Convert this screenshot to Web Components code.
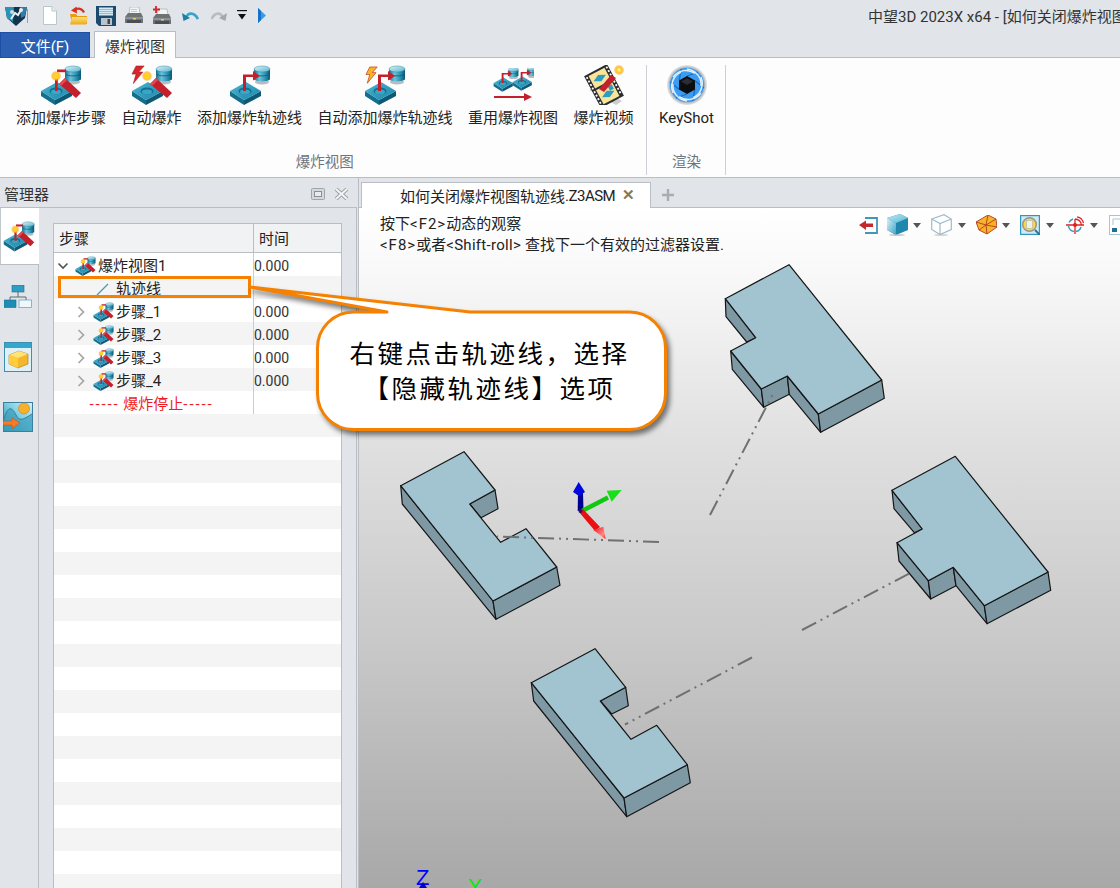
<!DOCTYPE html>
<html lang="zh">
<head>
<meta charset="utf-8">
<title>中望3D</title>
<style>
html,body{margin:0;padding:0;overflow:hidden;background:#e1e5e9}
body{font:15px Roboto,"Noto Sans CJK SC",sans-serif;color:#222}
</style>
</head>
<body>
<zw-app>
  <zw-titlebar title-text="中望3D 2023X x64 - [如何关闭爆炸视图"></zw-titlebar>
  <zw-menutabs></zw-menutabs>
  <zw-ribbon>
    <zw-ribbon-group label="爆炸视图" style="--gap:15.5px;--pl:16px;--pr:13.5px">
      <zw-ribbon-item icon="step" label="添加爆炸步骤"></zw-ribbon-item>
      <zw-ribbon-item icon="auto" label="自动爆炸"></zw-ribbon-item>
      <zw-ribbon-item icon="track" label="添加爆炸轨迹线"></zw-ribbon-item>
      <zw-ribbon-item icon="autotrack" label="自动添加爆炸轨迹线"></zw-ribbon-item>
      <zw-ribbon-item icon="reuse" label="重用爆炸视图"></zw-ribbon-item>
      <zw-ribbon-item icon="video" label="爆炸视频"></zw-ribbon-item>
    </zw-ribbon-group>
    <zw-ribbon-group label="渲染" style="--gap:0;--pl:12px;--pr:12px">
      <zw-ribbon-item icon="keyshot" label="KeyShot"></zw-ribbon-item>
    </zw-ribbon-group>
  </zw-ribbon>
  <zw-workspace>
    <zw-manager>
      <zw-tree>
        <zw-tree-row level="0" chevron="open" icon="step" label="爆炸视图1" time="0.000"></zw-tree-row>
        <zw-tree-row level="1" icon="line" label="轨迹线"></zw-tree-row>
        <zw-tree-row level="1" chevron="closed" icon="step" label="步骤_1" time="0.000"></zw-tree-row>
        <zw-tree-row level="1" chevron="closed" icon="step" label="步骤_2" time="0.000"></zw-tree-row>
        <zw-tree-row level="1" chevron="closed" icon="step" label="步骤_3" time="0.000"></zw-tree-row>
        <zw-tree-row level="1" chevron="closed" icon="step" label="步骤_4" time="0.000"></zw-tree-row>
        <zw-tree-row stop></zw-tree-row>
      </zw-tree>
    </zw-manager>
    <zw-viewport></zw-viewport>
  </zw-workspace>
  <zw-highlight></zw-highlight>
  <zw-callout>
    <span>右键点击轨迹线，选择</span>
    <span>【隐藏轨迹线】选项</span>
  </zw-callout>
</zw-app>

<script>
const DEFS = `<defs>
<linearGradient id="cyl" x1="0" x2="1" y1="0" y2="0"><stop offset="0" stop-color="#16708f"/><stop offset=".35" stop-color="#6cc3da"/><stop offset=".7" stop-color="#2b93b3"/><stop offset="1" stop-color="#0d5672"/></linearGradient>
<linearGradient id="cap" x1="0" x2="1" y1="0" y2="1"><stop offset="0" stop-color="#d8f0f6"/><stop offset="1" stop-color="#5eb4cd"/></linearGradient>
<radialGradient id="spark"><stop offset="0" stop-color="#fff6a8"/><stop offset=".55" stop-color="#ffc81e"/><stop offset="1" stop-color="#ff8a00" stop-opacity=".25"/></radialGradient>
<linearGradient id="plateTop" x1="0" x2="1" y1="0" y2="1"><stop offset="0" stop-color="#4cb4d2"/><stop offset="1" stop-color="#1c87aa"/></linearGradient>
<linearGradient id="folder" x1="0" x2="0" y1="0" y2="1"><stop offset="0" stop-color="#ffe07a"/><stop offset="1" stop-color="#f0a818"/></linearGradient>
<linearGradient id="boxTop" x1="0" x2="1" y1="0" y2="1"><stop offset="0" stop-color="#bfeaf5"/><stop offset="1" stop-color="#55b7d6"/></linearGradient>
<linearGradient id="boxFace" x1="0" x2="1" y1="0" y2="1"><stop offset="0" stop-color="#d9f2f8"/><stop offset="1" stop-color="#3fa3c7"/></linearGradient>
<linearGradient id="scene" x1="0" x2="1" y1="1" y2="0"><stop offset="0" stop-color="#1b7f9f"/><stop offset=".55" stop-color="#7fd0e4"/><stop offset="1" stop-color="#d5f1f7"/></linearGradient>
<radialGradient id="ks" cx=".5" cy=".5" r=".5"><stop offset=".82" stop-color="#8a97a3"/><stop offset=".92" stop-color="#c5ccd2"/><stop offset="1" stop-color="#e4e7ea"/></radialGradient>
</defs>`;
const plate = `<path d="M1 26V31L15 40V35Z" fill="#146f8e"/><path d="M15 35V40L32 31V26Z" fill="#0e5a76"/><path d="M1 26L17 17 32 26 15 35Z" fill="url(#plateTop)"/><ellipse cx="16" cy="26" rx="6.5" ry="3.6" fill="#146f8e"/><ellipse cx="16" cy="27" rx="5" ry="2.4" fill="#3aa5c6"/>`;
const db = (x=25,y=1,s=1)=>`<g transform="translate(${x} ${y}) scale(${s})"><ellipse cx="8" cy="16" rx="7" ry="2.5" fill="#9aa0a4" opacity=".7"/><path d="M0 3V13C0 16 16 16 16 13V3Z" fill="url(#cyl)"/><path d="M.5 8C2 10.5 14 10.5 15.5 8" fill="none" stroke="#0d5672" stroke-width=".8"/><ellipse cx="8" cy="3" rx="8" ry="3" fill="url(#cap)" stroke="#2b8cab" stroke-width=".5"/></g>`;
const bar = `<path d="M19 19L25 13 41 28 36 33Z" fill="#c3202c"/><path d="M19 19L25 13 27 15 21 21Z" fill="#e04a50"/>`;
const spark = `<circle cx="16" cy="11" r="5" fill="url(#spark)"/><path d="M16 6l.8 4 4-.8-3 1.800 3 1.800-4-.8-.8 4-.8-4-4 .8 3-1.800-3-1.800 4 .8z" fill="#ffd21e"/>`;
const wire = `<path d="M15 12V26h2.800V12z" fill="#c3202c"/><path d="M17 4.500h9V7.200h-9z" fill="#c3202c"/>`;
const bolt = `<path d="M9 0H3L0 6h3L1 13 8 4.500H5z" transform="translate(1 1) scale(1.350)" fill="#d8262c" stroke="#8e1a1a" stroke-width=".4"/>`;
const boltY = `<path d="M9 0H3L0 6h3L1 13 8 4.500H5z" transform="translate(2 2) scale(1.250)" fill="#f6b52a" stroke="#c0441c" stroke-width=".6"/>`;
const elbow = `<path d="M14 26V9.500H24V6L31 11 24 15.500V12H17V26Z" fill="#c3202c"/>`;
const svg = (w,h,b)=>`<svg xmlns="http://www.w3.org/2000/svg" viewBox="0 0 ${w} ${h}" width="100%" height="100%" style="display:block">${DEFS}${b}</svg>`;
const arr = `<path d="M1 4H9L5 9Z" fill="#555"/>`;
const ICONS = {
  step: svg(42,42,plate+db()+wire+bar+spark),
  auto: svg(42,42,plate+db()+bar+spark+bolt),
  track: svg(42,42,plate+db(25,1)+elbow),
  autotrack: svg(42,42,plate+db(25,1)+elbow+boltY),
  reuse: svg(42,36,`<g transform="translate(1 -1) scale(.62)">${plate}${db(25,1)}${elbow}</g><g transform="translate(20 -2) scale(.62)">${plate}${db(25,1)}${elbow}</g><path d="M2 28H32V25L40 29 32 33V30H2Z" fill="#c3202c"/>`),
  video: svg(40,40,`<path d="M5 25L32 40 38 36 12 21Z" fill="#c9ced2"/><g transform="rotate(-28 20 21)"><rect x="7" y="3" width="26" height="36" fill="#2a2c2e"/><rect x="11" y="5" width="18" height="14" fill="#f8e49a"/><rect x="11" y="21" width="18" height="16" fill="#f8e49a"/><g fill="#fff">${[5,9,13,17,21,25,29,33].map(y=>`<rect x="8" y="${y}" width="1.800" height="2"/><rect x="30.300" y="${y}" width="1.800" height="2"/>`).join('')}</g><path d="M13 12l7-3.500 7 3.500-7 3.500z" fill="#2f9dc0"/><path d="M13 30l7-3.500 7 3.500-7 3.500z" fill="#2f9dc0"/><rect x="23" y="23" width="4.500" height="5" fill="#2f9dc0"/></g><path d="M15 24L27 10 32 13 20 27Z" fill="#c3202c"/><circle cx="35" cy="5" r="5" fill="url(#spark)"/>`),
  keyshot: svg(40,40,`<circle cx="20" cy="20" r="20" fill="url(#ks)"/><circle cx="20" cy="20" r="17" fill="#3b9cf2"/><g stroke="#1a6fc4" stroke-width="1.300">${[0,60,120,180,240,300].map(a=>`<path d="M20 11L31 7" transform="rotate(${a} 20 20)"/>`).join('')}</g><g fill="none" stroke="#e4f0fa" stroke-width="1.500">${[0,60,120,180,240,300].map(a=>`<path d="M20 4C29 5 35 13 34 21" transform="rotate(${a} 20 20)"/>`).join('')}</g><path d="M20 11L28 15.500V24.500L20 29 12 24.500V15.500Z" fill="#0c0d10"/><path d="M20 13L26 16.500 20 20 14 16.500Z" fill="#2a2d33"/>`),
  logo: svg(22,20,`<path d="M0 1H22L20 12 11 20 2 12Z" fill="#11344e"/><path d="M0 1H9L8 16 2 12Z" fill="#2a93b8"/><path d="M15 1H22L20 10 16 12Z" fill="#2f7fa6"/><path d="M6 13L10 7 13 9 16 4" fill="none" stroke="#e8eef2" stroke-width="2"/><circle cx="16" cy="4" r="2" fill="#e8eef2"/><circle cx="7" cy="6" r="2" fill="#cfd9df"/>`),
  file: svg(14,19,`<path d="M.5 .5H9L13.500 5V18.500H.5Z" fill="#fff" stroke="#b9c6ce"/><path d="M9 .5V5H13.500" fill="#e8eef2" stroke="#b9c6ce"/>`),
  open: svg(19,19,`<path d="M1 8H7L8.500 10H18V18H3Z" fill="#e99c12"/><path d="M3 11H19L17 18.500H1Z" fill="url(#folder)"/><path d="M15 6.500C13 2 9 2 6 4" fill="none" stroke="#d9301e" stroke-width="2.200"/><path d="M7.500 .5L2 4.500 8 7.500Z" fill="#d9301e"/>`),
  save: svg(20,20,`<path d="M0 0H20V20H3L0 17Z" fill="#1c4a6c"/><rect x="3" y="1.500" width="14" height="8" fill="#d5e9f2"/><path d="M3 3.500H17M3 5.500H17M3 7.500H17" stroke="#7fb4cd" stroke-width=".8"/><rect x="5" y="12" width="11" height="7" fill="#b9c3c9"/><rect x="11.500" y="13" width="2.500" height="5" fill="#33495a"/>`),
  print: svg(18,18,`<path d="M5 0H14L15 7H4Z" fill="#f4f4f4" stroke="#9aa1a6" stroke-width=".6"/><path d="M6 2.500H12M6 4.500H12" stroke="#aab" stroke-width=".6"/><path d="M3 6H16L18 10V16H0V10Z" fill="#6d7277"/><path d="M0 10H18V12H0Z" fill="#8d9296"/><rect x="2" y="13" width="14" height="3" fill="#4b4f53"/><rect x="8" y="11" width="3" height="1.500" fill="#e8d43a"/>`),
  print2: svg(18,20,`<path d="M5 3H14L15 9H4Z" fill="#f4f4f4" stroke="#9aa1a6" stroke-width=".6"/><path d="M3 8H16L18 12V18H0V12Z" fill="#6d7277"/><path d="M0 12H18V14H0Z" fill="#8d9296"/><rect x="2" y="15" width="14" height="3" fill="#4b4f53"/><rect x="8" y="13" width="3" height="1.500" fill="#e8d43a"/><path d="M3 0V7M0 3.500H7" stroke="#d8252c" stroke-width="1.800"/>`),
  undo: svg(17,12,`<path d="M4 8C6 2 12 2 16 9" fill="none" stroke="#3aa3c8" stroke-width="2.600"/><path d="M0 3L1.500 11 8 8Z" fill="#1d7ea6"/>`),
  redo: svg(16,12,`<path d="M12 8C10 2 4 2 .5 9" fill="none" stroke="#b9bdc0" stroke-width="2.600"/><path d="M16 3L14.500 11 8 8Z" fill="#a4a8ab"/>`),
  dd: svg(10,11,`<path d="M0 .5H10" stroke="#111" stroke-width="1.400"/><path d="M1 4H9L5 9.500Z" fill="#111"/>`),
  play: svg(8,15,`<path d="M0 0L8 7.500 0 15Z" fill="#3a9ae8"/><path d="M0 0L3 3V12L0 15Z" fill="#1a70c0"/>`),
  line: svg(21,21,`<path d="M4 16L15 5" stroke="#4a94bb" stroke-width="1.200"/>`),
  chevOpen: svg(12,12,`<path d="M1.500 3.500L6 8 10.500 3.500" fill="none" stroke="#555" stroke-width="1.700"/>`),
  chevClosed: svg(12,12,`<path d="M3.500 1L8.500 6 3.500 11" fill="none" stroke="#a5a5a5" stroke-width="1.700"/>`),
  tree: svg(28,23,`<path d="M14 6V12M6 12H22M6 12V15M22 12V15" stroke="#5c6a74" fill="none"/><rect x="8" y="0" width="12" height="7" fill="#2e9dc4" stroke="#1a6f90" stroke-width=".6"/><rect x="0" y="15" width="12" height="7.500" fill="#1f8cb4" stroke="#1a6f90" stroke-width=".6"/><rect x="15" y="15" width="12.500" height="7.500" fill="#f0f7fa" stroke="#6aa9c2" stroke-width=".8"/>`),
  cubeWin: svg(28,30,`<rect x=".5" y=".5" width="27" height="29" fill="#dff0f6" stroke="#3d8fb0"/><rect x="1" y="1" width="26" height="5" fill="#35a6cd"/><path d="M5 13L15 9 24 12V22L14 26 5 22Z" fill="#f5b62a" stroke="#a87c1a" stroke-width=".6"/><path d="M5 13L15 9 24 12 14 16Z" fill="#ffe27a"/><path d="M14 16V26L5 22V13Z" fill="#ffcc3a"/>`),
  scene: svg(30,30,`<rect x=".5" y=".5" width="29" height="29" fill="url(#scene)" stroke="#3b7f9c"/><path d="M1 17C5 3 9 5 13 13S22 16 29 12V29H1Z" fill="#3fa0bf" opacity=".75"/><path d="M1 17C5 3 9 5 13 13S22 16 29 12" fill="none" stroke="#377f9c"/><circle cx="21" cy="6.500" r="5.500" fill="#f7b02a" stroke="#cf7f20" stroke-width=".6"/><path d="M0 19H9V15.500L17 21 9 26.500V23H0Z" fill="#f47b28" stroke="#b9521a" stroke-width=".5"/>`),
  ret: svg(19,17,`<path d="M6 1H18V16H6" fill="none" stroke="#3f97b9" stroke-width="1.800"/><path d="M0 8L7 3.500V6.500H14V10H7V13Z" fill="#c3282c"/>`),
  box: svg(21,22,`<path d="M0 4L13 0 21 4V16L9 21 0 16Z" fill="#1f86ad"/><path d="M0 4L13 0 21 4 9 9Z" fill="url(#boxTop)"/><path d="M0 4L9 9V21L0 16Z" fill="url(#boxFace)"/><ellipse cx="10" cy="21" rx="8" ry="1" fill="#aaa" opacity=".6"/>`),
  wire: svg(21,22,`<path d="M.7 5L13 .7 20.300 5V15.500L9 20.500 .7 15.500ZM.7 5L9 9.500 20.300 5M9 9.500V20.500" fill="#fff" stroke="#9dbccb" stroke-width="1.200"/><ellipse cx="10" cy="21" rx="7" ry="1" fill="#bbb" opacity=".6"/>`),
  poly: svg(21,20,`<path d="M0 7L12 0 20 4 21 12 11 19 3 15Z" fill="#f6b42a" stroke="#b5391c" stroke-width=".9"/><path d="M12 0L10 10 0 7M10 10L20 4M10 10L21 12M10 10L11 19M10 10L3 15" stroke="#b5391c" stroke-width=".9" fill="none"/>`),
  zoomv: svg(20,20,`<rect x=".5" y=".5" width="19" height="19" fill="#cfeaf3" stroke="#2d97bd" stroke-width="1.400"/><circle cx="9.500" cy="9.500" r="6.800" fill="#f6d84a" stroke="#9a9488" stroke-width="1.500"/><rect x="6.500" y="5.500" width="6" height="8" fill="#eef0ea" stroke="#9aa" stroke-width=".5"/><path d="M15 15L20 20" stroke="#2d6f90" stroke-width="1.800"/>`),
  target: svg(18,18,`<path d="M9 3A6.500 6.500 0 0 1 15.500 9" fill="none" stroke="#e02020" stroke-width="1.300"/><path d="M11 .8A8 8 0 0 1 17.500 7" fill="none" stroke="#e02020" stroke-width="1.200"/><path d="M2.500 10A6.500 6.500 0 0 0 8 15.500M10 15.500A6.500 6.500 0 0 0 15 11M3 6.500A6.500 6.500 0 0 1 7 3" fill="none" stroke="#3a9abf" stroke-width="1.500"/><path d="M0 9H18M9 3V18" stroke="#e02020" stroke-width="1.300"/><circle cx="9" cy="9" r="2" fill="#e02020"/>`),
  win: svg(20,20,`<rect x=".5" y=".5" width="19" height="19" fill="#fff" stroke="#9ec7d8"/><path d="M4 4H16" stroke="#9ec7d8"/><path d="M4 4V10" stroke="#9ec7d8"/><rect x="3" y="13" width="5" height="4" fill="#1f6f95"/>`),
  arr: svg(10,12,arr),
  restore: svg(14,12,`<rect x=".5" y=".5" width="13" height="11" rx="1" fill="#d4d8dc" stroke="#a0a5aa"/><rect x="3.500" y="3.500" width="7" height="5" fill="#e9ecef" stroke="#8b9095"/>`),
  close: svg(15,12,`<path d="M2 1L13 11M13 1L2 11" stroke="#a0a5aa" stroke-width="4"/><path d="M2 1L13 11M13 1L2 11" stroke="#f5f6f7" stroke-width="1.800"/>`),
};

class Base extends HTMLElement{
  constructor(){super();this.attachShadow({mode:'open'})}
  render(h){this.shadowRoot.innerHTML=h}
}
const def=(n,c)=>customElements.define(n,c);
const FONT=`font-family:Roboto,"Noto Sans CJK SC",sans-serif;`;

def('zw-icon',class extends Base{
  connectedCallback(){
    const w=this.getAttribute('w')||20,h=this.getAttribute('h')||20,m=this.getAttribute('ml')||0;
    this.render(`<style>:host{display:block;flex:none;width:${w}px;height:${h}px;margin-left:${m}px}</style>${ICONS[this.getAttribute('name')]}`);
  }
});

def('zw-app',class extends Base{
  connectedCallback(){this.render(`<style>:host{display:flex;flex-direction:column;position:relative;width:1120px;height:888px;overflow:hidden;background:#e1e5e9;${FONT}font-size:15px;color:#222}</style><slot></slot>`)}
});

def('zw-titlebar',class extends Base{
  connectedCallback(){
    const q=[['logo',22,20,0],['file',14,19,15],['open',19,19,12],['save',20,20,8],['print',18,18,9],['print2',18,20,10],['undo',17,12,11],['redo',16,12,12],['dd',10,11,10],['play',8,15,11]];
    this.render(`<style>
    :host{display:flex;flex:none;align-items:center;height:31px;background:#e1e5e9;padding-left:5px;overflow:hidden}
    .sep{width:1px;height:14px;background:#9aa0a5;flex:none}
    .t{margin-left:602px;white-space:nowrap;flex:none;font-size:15px;color:#333}
    </style>${q.map(([n,w,h,m],i)=>`<zw-icon name="${n}" w="${w}" h="${h}" ml="${m}"></zw-icon>${i==0?'<span class="sep"></span>':''}`).join('')}<span class="t">${this.getAttribute('title-text')}</span>`);
  }
});

def('zw-menutabs',class extends Base{
  connectedCallback(){this.render(`<style>
    :host{display:flex;flex:none;height:27px;align-items:flex-end;gap:4px;background:#e1e5e9;box-sizing:border-box;border-bottom:1px solid #b9bec4}
    .f{width:90px;height:26px;margin-bottom:-1px;box-sizing:border-box;background:#2c5fb2;border:1px solid #1c4fa8;color:#fff;display:flex;align-items:center;justify-content:center}
    .v{width:82px;height:27px;margin-bottom:-1px;box-sizing:border-box;background:#fdfdfd;border:1px solid #b9bec4;border-bottom:0;display:flex;align-items:center;justify-content:center;color:#333}
    </style><div class="f">文件(F)</div><div class="v">爆炸视图</div>`)}
});

def('zw-ribbon',class extends Base{
  connectedCallback(){this.render(`<style>:host{display:flex;flex:none;height:120px;background:#fdfdfd;border-bottom:1px solid #b9bec4;box-sizing:border-box}</style><slot></slot>`)}
});
def('zw-ribbon-group',class extends Base{
  connectedCallback(){this.render(`<style>
    :host{display:flex;flex-direction:column;flex:none;position:relative;box-sizing:border-box;padding:7px var(--pr) 0 var(--pl);height:118px}
    :host::after{content:"";position:absolute;right:0;top:7px;bottom:1px;width:1px;background:#cdd1d5}
    .items{display:flex;gap:var(--gap);flex:1}
    .l{height:30px;text-align:center;color:#6c7580;line-height:34px;font-size:14.500px}
    </style><div class="items"><slot></slot></div><div class="l">${this.getAttribute('label')}</div>`)}
});
def('zw-ribbon-item',class extends Base{
  connectedCallback(){
    const n=this.getAttribute('icon');
    const sz={reuse:[42,36,3],video:[40,40,0],keyshot:[40,40,0]}[n]||[42,42,0];
    this.render(`<style>
    :host{display:flex;flex-direction:column;align-items:center;flex:none}
    .b{height:42px;display:flex;align-items:flex-start;padding-top:${sz[2]}px;box-sizing:border-box}
    .t{white-space:nowrap;line-height:22px;color:#222}
    </style><div class="b"><zw-icon name="${n}" w="${sz[0]}" h="${sz[1]}"></zw-icon></div><div class="t">${this.getAttribute('label')}</div>`);
  }
});

def('zw-workspace',class extends Base{
  connectedCallback(){this.render(`<style>:host{display:flex;flex:1;min-height:0;background:#e1e5e9}</style><slot></slot>`)}
});

def('zw-manager',class extends Base{
  connectedCallback(){this.render(`<style>
    :host{display:flex;flex-direction:column;flex:none;width:357px;box-sizing:border-box}
    .h{height:30px;flex:none;display:flex;align-items:center;padding:2px 8px 0 4px;box-sizing:border-box;color:#333;border-bottom:1px solid #b9bec4}
    .h span{flex:1}
    .b{flex:1;display:flex;min-height:0;border-right:1px solid #b9bec4}
    .rail{width:39px;flex:none;display:flex;flex-direction:column;border-right:1px solid #b9bec4;box-sizing:border-box}
    .rt{display:flex;align-items:center;justify-content:center;height:60px;flex:none;padding-right:2px;box-sizing:border-box}
    .rt.on{height:57px;background:#fff;border-left:1px solid #c2c7cc;border-bottom:1px solid #b9bec4;margin-right:-1px;padding:2px 3px 0 0;position:relative}
    .main{flex:1;padding:15px 14px 0 14px;min-width:0;display:flex}
    </style>
    <div class="h"><span>管理器</span><zw-icon name="restore" w="14" h="12"></zw-icon><zw-icon name="close" w="15" h="12" ml="9"></zw-icon></div>
    <div class="b"><div class="rail">
      <div class="rt on"><zw-icon name="step" w="32" h="32"></zw-icon></div>
      <div class="rt" style="height:62px"><zw-icon name="tree" w="28" h="23"></zw-icon></div>
      <div class="rt"><zw-icon name="cubeWin" w="28" h="30"></zw-icon></div>
      <div class="rt"><zw-icon name="scene" w="30" h="30"></zw-icon></div>
    </div><div class="main"><slot></slot></div></div>`)}
});

def('zw-tree',class extends Base{
  connectedCallback(){this.render(`<style>
    :host{display:flex;flex-direction:column;flex:1;min-width:0;border-left:1px solid #b9bec4;border-right:1px solid #b9bec4;box-sizing:border-box}
    .hd{height:30px;flex:none;display:grid;grid-template-columns:199px 1fr;background:#f1f2f3;border-top:1px solid #b9bec4;border-bottom:1px solid #b9bec4;box-sizing:border-box;line-height:30px}
    .hd div{padding-left:5px}
    .hd div+div{border-left:1px solid #b9bec4}
    .bd{flex:1;background:repeating-linear-gradient(#fff 0 23px,#f4f4f4 23px 46px)}
    </style><div class="hd"><div>步骤</div><div>时间</div></div><div class="bd"><slot></slot></div>`)}
});

def('zw-tree-row',class extends Base{
  connectedCallback(){
    const lv=+this.getAttribute('level')||0,c=this.getAttribute('chevron'),ic=this.getAttribute('icon'),t=this.getAttribute('time')||'',stop=this.hasAttribute('stop');
    const first=stop?`<div class="a stop"><span class="d">-----</span>&nbsp;爆炸停止<span class="d">-----</span></div>`:`<div class="a" style="padding-left:${3+lv*18}px"><span class="chev">${c?`<zw-icon name="${c=='open'?'chevOpen':'chevClosed'}" w="12" h="12"></zw-icon>`:''}</span><zw-icon name="${ic}" w="21" h="21"></zw-icon><span class="lb">${this.getAttribute('label')}</span></div>`;
    this.render(`<style>
    :host{display:grid;grid-template-columns:199px 1fr;grid-template-rows:23px;height:23px;line-height:23px}
    .a{display:flex;align-items:center;white-space:nowrap;min-width:0;padding-top:3px;height:20px}
    .chev{width:18px;flex:none;display:flex}
    .lb{margin-left:2px;color:#222}
    .stop{justify-content:center;color:#ee1c25;padding-right:4px}
    .d{letter-spacing:1.900px}
    .b{border-left:1px solid #c9cdd2;font-size:14px;color:#333;line-height:25px;padding-top:1px;height:22px}
    </style>${first}<div class="b">${t}</div>`);
  }
});

def('zw-viewport',class extends Base{
  connectedCallback(){
    const tb=[['ret',19,17,0],['box',21,22,9],['arr',10,12,4],['wire',21,22,9],['arr',10,12,5],['poly',21,20,9],['arr',10,12,4],['zoomv',20,20,9],['arr',10,12,5],['target',18,18,11],['arr',10,12,5],['win',20,20,10]];
    this.render(`<style>
    :host{display:flex;flex-direction:column;flex:1;min-width:0;margin-left:1px;border-left:1px solid #b9bec4;position:relative;overflow:hidden}
    .tabs{height:30px;flex:none;display:flex;align-items:flex-end;padding-left:2px;box-sizing:border-box;border-bottom:1px solid #b9bec4}
    .tab{width:290px;height:26px;margin-bottom:-1px;background:#fff;box-sizing:border-box;border:1px solid #b9bec4;border-bottom:0;display:flex;align-items:center;padding-left:38px;white-space:nowrap;color:#222}
    .n{letter-spacing:-.5px}
    .x{margin-left:7px;color:#85775f;font-size:15px;font-weight:700;line-height:1}
    .plus{width:14px;height:14px;display:flex;margin-left:10px;margin-bottom:5px}
    .scene{flex:1;position:relative;background:linear-gradient(#fff 0,#f9f9f9 60px,#e0e0e0 232px,#c9c9c9 432px,#a8a8a8 680px);overflow:hidden}
    .info{position:absolute;left:21px;top:6px;line-height:21px;white-space:nowrap;color:#222;font-size:15px}
    .w1{letter-spacing:1px}.w2{letter-spacing:.3px}
    .bar{position:absolute;left:500px;top:6px;display:flex;align-items:center;width:300px;height:22px}
    </style>
    <div class="tabs"><div class="tab">如何关闭爆炸视图轨迹线<span class="n">.Z3ASM</span><span class="x">✕</span></div>
    <div class="plus"><svg viewBox="0 0 14 14" width="14" height="14"><path d="M7 1V13M1 7H13" stroke="#a9adb1" stroke-width="2.400"/></svg></div></div>
    <div class="scene">
      <zw-scene></zw-scene>
      <div class="info"><div>按下<span class="w1">&lt;F2&gt;</span>动态的观察</div><div><span class="w1">&lt;F8&gt;</span>或者<span class="w2">&lt;Shift-roll&gt;</span> 查找下一个有效的过滤器设置.</div></div>
      <div class="bar">${tb.map(([n,w,h,m])=>`<zw-icon name="${n}" w="${w}" h="${h}" ml="${m}"></zw-icon>`).join('')}</div>
    </div>`);
  }
});

const poly=(p,f)=>`<polygon points="${p}" fill="${f}"/>`;
const SIDE='#7e99a4',TOP='#a2c3d0';
const shape=(sides,top)=>`<g stroke="#151515" stroke-width="1.200" stroke-linejoin="round">${sides.map(s=>poly(s,SIDE)).join('')}${poly(top,TOP)}</g>`;
const dashLine=(a,b,c,d)=>`<line x1="${a}" y1="${b}" x2="${c}" y2="${d}" stroke="#707070" stroke-width="2" stroke-dasharray="16 5 2 5 2 5"/>`;

def('zw-scene',class extends Base{
  connectedCallback(){
    const s1=shape([
      '725.3,298.7 755.7,337.7 746.7,342 726,316.7',
      '730.7,351 761.3,389 763.7,407.3 732.3,369.3',
      '761.3,389 787.3,376 789.3,394.3 763.7,407.3',
      '787.3,376 818.3,414 820.7,432.3 789.3,394.3',
      '818.3,414 881.7,380 884.3,398.3 820.7,432.3'],
      '725.3,298.7 789,264.7 881.7,380 818.3,414 787.3,376 761.3,389 730.7,351 755.7,337.7');
    const s4=shape([
      '892,490.3 922.3,529 914.3,532.7 894,508.7',
      '897,542.7 928.3,580.7 930.7,599 899,561',
      '928.3,580.7 953.3,567.3 956,585.7 930.7,599',
      '953.3,567.3 984.3,605.7 987,623.7 956,585.7',
      '984.3,605.7 1048,572 1050.7,590.3 987,623.7'],
      '892,490.3 955.3,456.3 1048,572 984.3,605.7 953.3,567.3 928.3,580.7 897,542.7 922.3,529');
    const s2=shape([
      '400.7,485.7 493,601 496,619.3 402.3,504',
      '493,601 556.7,567 560,585.3 496,619.3',
      '495,490 469.7,504 481,517.7 498,508.7'],
      '400.7,485.7 464,451.7 495,490 469.7,504 500.7,542.3 526,528.7 556.7,567 493,601');
    const s3=shape([
      '531.3,682.7 624,798 626.7,816.7 533.7,701',
      '624,798 687.3,764.7 690.3,782.7 626.7,816.7',
      '625.7,687.3 600.3,701 611.7,714 628.3,705.7'],
      '531.3,682.7 595,648.7 625.7,687.3 600.3,701 631,739.3 656.7,725.3 687.3,764.7 624,798');
    this.render(`<style>:host{position:absolute;left:0;top:0;width:761px;height:680px;display:block}</style>
    <svg xmlns="http://www.w3.org/2000/svg" width="761" height="680" viewBox="359 208 761 680" style="display:block;position:absolute;left:0;top:0">
      <defs>
        <linearGradient id="rh" x1="0" x2="1" y1="0" y2="1"><stop offset="0" stop-color="#f01010"/><stop offset=".7" stop-color="#ff8a8a"/><stop offset="1" stop-color="#f01818"/></linearGradient>
      </defs>
      ${s1}${s2}${s3}${s4}
      ${dashLine(659,542,497,536.500)}
      ${dashLine(710,515,774,392)}
      ${dashLine(802,630,912,572)}
      ${dashLine(752,657.500,625,724.500)}
      <g>
        <polygon points="577.700,511 578,493 583,493 583.500,510" fill="#000090"/>
        <polygon points="578.700,482 585,492 579,496 573,492" fill="#0008e0"/>
        <polygon points="581,509 607,495.500 609,499.500 583,513" fill="#10c810"/>
        <polygon points="606.700,490.700 621.700,490 611.700,501.700" fill="#16e016"/>
        <polygon points="579,512 583,509 600,527 595,531" fill="#e81010"/>
        <polygon points="593.300,530 603.300,526.700 605.700,539.300" fill="url(#rh)"/>
        <circle cx="580.500" cy="511" r="2" fill="#301060"/>
      </g>
      <text x="416" y="885" font-family="Liberation Sans" font-size="22" fill="#0000ff">Z</text>
      <path d="M423 882L419 888H427Z" fill="#0000cc"/>
      <text x="468" y="893" font-family="Liberation Sans" font-size="21" fill="#00ee00">Y</text>
    </svg>`);
  }
});

def('zw-highlight',class extends Base{
  connectedCallback(){this.render(`<style>:host{position:absolute;left:58px;top:276px;width:193px;height:22px;box-sizing:border-box;border:3px solid #f68000;display:block}</style>`)}
});
def('zw-callout',class extends Base{
  connectedCallback(){this.render(`<style>
    :host{position:absolute;left:240px;top:270px;width:440px;height:175px;display:block}
    svg{position:absolute;left:0;top:0;overflow:visible}
    .t{position:absolute;left:75px;top:40px;width:349px;height:118px;display:flex;flex-direction:column;align-items:center;justify-content:center;font:25.500px/35px "Noto Sans CJK SC",sans-serif;letter-spacing:2.500px;color:#000}
    ::slotted(span){display:block;white-space:nowrap}
    </style>
    <svg width="440" height="175" viewBox="0 0 440 175"><path d="M10 17L230 42H389.500A36 36 0 0 1 425.500 78V123.500A36 36 0 0 1 389.500 159.500H113.500A36 36 0 0 1 77.500 123.500V78A36 36 0 0 1 113.500 42H147Z" fill="#fff" stroke="#f68000" stroke-width="3" stroke-linejoin="round" style="filter:drop-shadow(3px 4px 2.500px rgba(0,0,0,.5))"/></svg>
    <div class="t"><slot></slot></div>`)}
});
</script>
</body>
</html>
